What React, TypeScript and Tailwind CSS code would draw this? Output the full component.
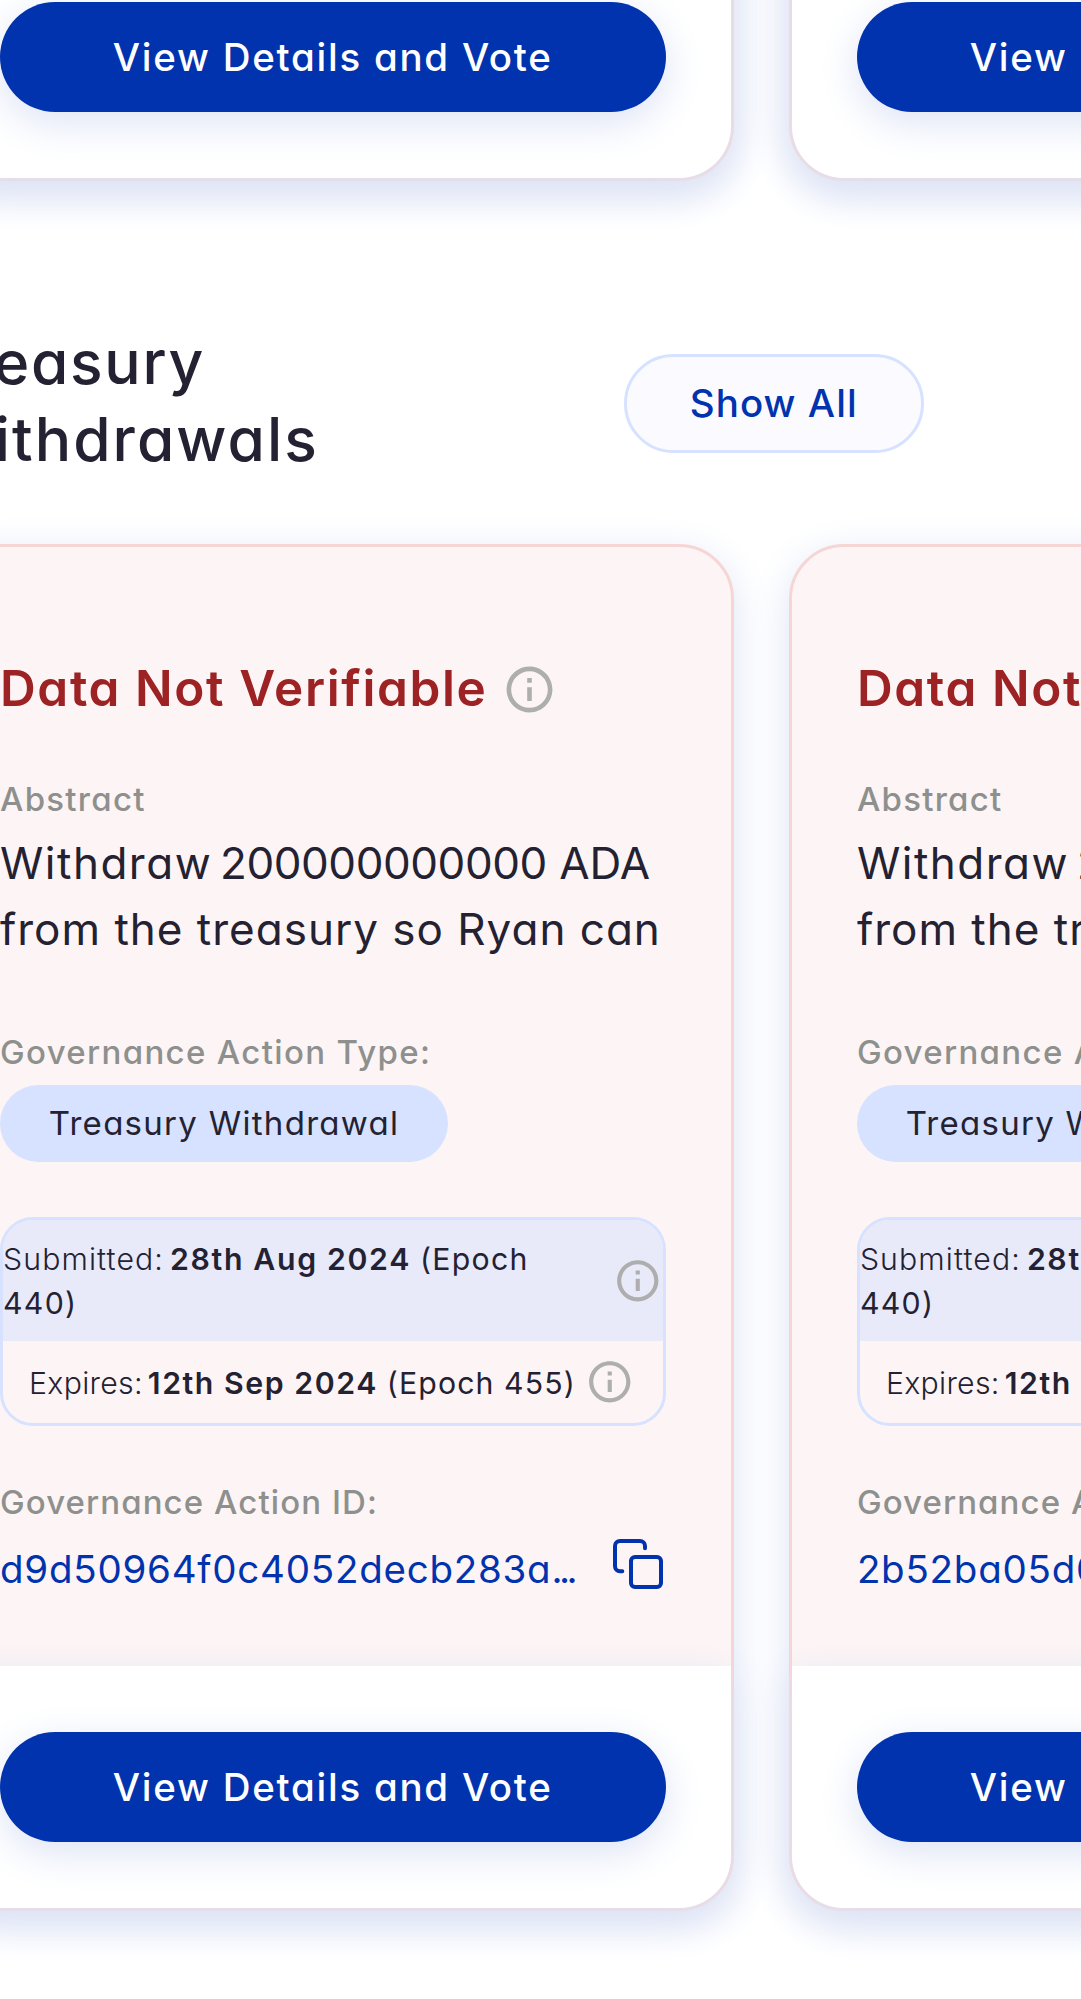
import type { ReactNode } from "react";

function InfoIcon({ className }: { className: string }) {
  return (
    <svg viewBox="0 0 24 24" fill="#adaead" className={`shrink-0 ${className}`}>
      <path d="M11 7h2v2h-2zm0 4h2v6h-2zm1-9C6.48 2 2 6.48 2 12s4.48 10 10 10 10-4.48 10-10S17.52 2 12 2m0 18c-4.41 0-8-3.59-8-8s3.59-8 8-8 8 3.59 8 8-3.59 8-8 8" />
    </svg>
  );
}

function CopyIcon() {
  return (
    <svg
      viewBox="0 0 50 50"
      fill="none"
      stroke="#0033ad"
      strokeWidth="4"
      strokeLinecap="round"
      strokeLinejoin="round"
      className="mt-px mr-[2.5px] h-[50px] w-[50px] shrink-0"
    >
      <rect x="18" y="18" width="30" height="30" rx="4" />
      <path d="M9.3 32.3H7a5 5 0 0 1-5-5V7a5 5 0 0 1 5-5h20a5 5 0 0 1 5 5v2.2" />
    </svg>
  );
}

function Label({ children, className }: { children: ReactNode; className: string }) {
  return (
    <p className={`text-[33px] leading-[44px] font-medium whitespace-nowrap text-[#8e908e] ${className}`}>
      {children}
    </p>
  );
}

function ActionCard({ className, children }: { className: string; children?: ReactNode }) {
  return (
    <article
      className={`flex w-[801.5px] shrink-0 flex-col rounded-[55px] border-[3px] border-[#f6d5d5] bg-[#fdf5f5] shadow-[0_11px_41px_0_#dde3f5] ${className}`}
    >
      <div className="flex grow flex-col px-[65px]">{children}</div>
      <footer className="rounded-b-[52px] bg-white px-[65px] py-[66px] shadow-[0_11px_41px_0_#dde3f5]">
        <button className="flex h-[110px] w-full items-center justify-center rounded-full bg-[#0033ad] pt-[2px] text-[38.5px] font-medium tracking-[1.74px] whitespace-nowrap text-white shadow-[0_11px_41px_0_#dde3f5]">
          View Details and Vote
        </button>
      </footer>
    </article>
  );
}

function WithdrawalCard({ id }: { id: string }) {
  return (
    <ActionCard className="h-[1367px]">
      <div className="mt-[108px] flex h-[66px] items-center">
        <h3 className="text-[49.5px] leading-[66px] font-semibold tracking-[1.62px] whitespace-nowrap text-[#9c2224]">
          Data Not Verifiable
        </h3>
        <InfoIcon className="mt-[4px] ml-[15px] h-[55px] w-[55px]" />
      </div>

      <Label className="mt-[56px] tracking-[1.26px]">Abstract</Label>
      <p className="mt-[9px] text-[44px] leading-[66px] whitespace-nowrap text-[#242232]">
        <span className="tracking-[1.5px]">Withdraw</span>
        <span className="tracking-[-4.5px]"> </span>
        <span className="tracking-[-0.45px]">200000000000</span>
        <span> ADA</span>
        <br />
        <span className="tracking-[1px]">from the treasury so Ryan can</span>
      </p>

      <Label className="mt-[68px] tracking-[1.33px]">Governance Action Type:</Label>
      <div className="mt-[11px] flex h-[77px] w-[448px] items-center justify-center rounded-full bg-[#d6e2ff] pt-[2px] text-[33px] tracking-[1.28px] whitespace-nowrap text-[#242232]">
        Treasury Withdrawal
      </div>

      <div className="mt-[55px] h-[209.5px] overflow-hidden rounded-[33px] border-[3px] border-[#d6e2ff] text-[30.25px] leading-[44px] whitespace-nowrap text-[#242232]">
        <div className="flex h-[121px] items-center justify-between bg-[#e8eafa]">
          <p className="pt-[2px]">
            <span className="font-light tracking-[1.1px]">Submitted:</span>
            <span className="ml-[6px] font-semibold tracking-[1.65px]">28th Aug 2024</span>
            <span className="ml-[9px] tracking-[1.3px]">
              (Epoch
              <br />
              440)
            </span>
          </p>
          <InfoIcon className="mt-px h-[49.5px] w-[49.5px]" />
        </div>
        <div className="flex h-[83px] items-center pl-[26px]">
          <p className="pt-px">
            <span className="font-light tracking-[0.3px]">Expires:</span>
            <span className="ml-[5px] font-semibold tracking-[1.55px]">12th Sep 2024</span>
            <span className="ml-[9px] tracking-[1.1px]">(Epoch 455)</span>
          </p>
          <InfoIcon className="ml-[9px] h-[49.5px] w-[49.5px]" />
        </div>
      </div>

      <Label className="mt-[54px] tracking-[1.08px]">Governance Action ID:</Label>
      <div className="mt-[14px] flex items-start justify-between text-[#0033ad]">
        <p className="mt-[4px] text-[38.5px] leading-[55px] whitespace-nowrap">
          <span className="tracking-[0.75px]">{id}</span>
          <span className="tracking-[-3.6px]">...</span>
        </p>
        <CopyIcon />
      </div>
    </ActionCard>
  );
}

export default function App() {
  return (
    <main className="h-[1999px] w-full overflow-hidden bg-white font-['Inter',sans-serif] [font-feature-settings:'cv11']">
      <div className="-ml-[68px] flex w-[1700px] flex-col">
        <div className="-mt-[200px] flex gap-[55.4px]">
          <ActionCard className="h-[380.5px]" />
          <ActionCard className="h-[380.5px]" />
        </div>

        <header className="mt-[143px] flex w-[991.5px] items-center justify-between">
          <h2 className="text-[60.5px] leading-[77px] font-medium whitespace-nowrap text-[#242232]">
            <span className="tracking-[1.7px]">Treasury</span>
            <br />
            <span className="tracking-[2.05px]">Withdrawals</span>
          </h2>
          <button className="mt-[6px] flex h-[99px] w-[299.5px] items-center justify-center rounded-full border-[3px] border-[#d6e2ff] bg-[#fbfbff] text-[38.5px] font-medium tracking-[1.05px] whitespace-nowrap text-[#0033ad]">
            Show All
          </button>
        </header>

        <div className="mt-[66px] flex gap-[55.4px]">
          <WithdrawalCard id="d9d50964f0c4052decb283a" />
          <WithdrawalCard id="2b52ba05d0a7413c86e915b" />
        </div>
      </div>
    </main>
  );
}
